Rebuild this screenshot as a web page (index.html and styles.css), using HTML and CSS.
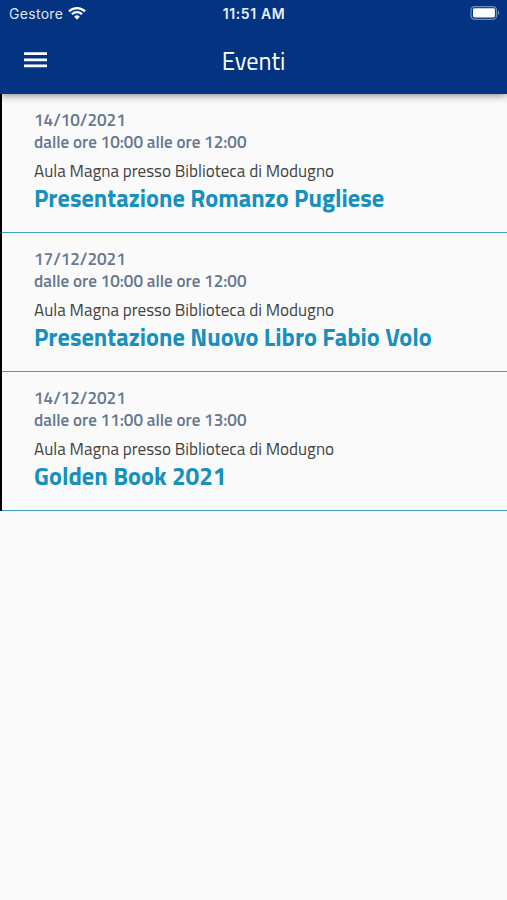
FILE: index.html
```html
<!DOCTYPE html>
<html lang="it">
  <head>
    <meta charset="utf-8">
    <meta name="viewport" content="width=device-width, initial-scale=1">
    <title>Eventi</title>
    <link rel="stylesheet" href="styles.css">
  </head>
  <body>
    <header class="header">
      <div class="status-bar">
        <div class="carrier">
          <span>Gestore</span>
          <svg class="wifi" viewBox="0 0 18 14" width="18" height="14">
            <path d="M1 5.3 A11.5 11.5 0 0 1 17 5.3" />
            <path d="M3.9 8.3 A7.3 7.3 0 0 1 14.1 8.3" />
            <path class="wifi-dot" d="M6.2 10.7 A4 4 0 0 1 11.8 10.7 L9 13.7 Z" />
          </svg>
        </div>
        <span class="clock">11:51 AM</span>
        <svg class="battery" viewBox="0 0 31 14" width="31" height="14">
          <rect class="battery-case" x="1" y=".7" width="25.5" height="12.6" rx="3.6" />
          <rect x="3" y="2.3" width="21.9" height="9.2" rx="1.4" />
          <path class="battery-cap" d="M28 4.6 Q30.6 7 28 9.4 Z" />
        </svg>
      </div>
      <div class="toolbar">
        <button class="menu" aria-label="Menu">
          <svg viewBox="0 0 23 16" width="23" height="16">
            <path d="M0 1.6 H23 M0 7.8 H23 M0 13.9 H23" />
          </svg>
        </button>
        <h1 class="title">Eventi</h1>
      </div>
    </header>
    <main class="events">
      <article class="event">
        <p class="date">14/10/2021</p>
        <p class="time">dalle ore 10:00 alle ore 12:00</p>
        <p class="place">Aula Magna presso Biblioteca di Modugno</p>
        <h2 class="name">Presentazione Romanzo Pugliese</h2>
      </article>
      <article class="event">
        <p class="date">17/12/2021</p>
        <p class="time">dalle ore 10:00 alle ore 12:00</p>
        <p class="place">Aula Magna presso Biblioteca di Modugno</p>
        <h2 class="name">Presentazione Nuovo Libro Fabio Volo</h2>
      </article>
      <article class="event">
        <p class="date">14/12/2021</p>
        <p class="time">dalle ore 11:00 alle ore 13:00</p>
        <p class="place">Aula Magna presso Biblioteca di Modugno</p>
        <h2 class="name">Golden Book 2021</h2>
      </article>
    </main>
  </body>
</html>
```

FILE: styles.css
```css
* {
  box-sizing: border-box;
}
body {
  --primary: #033381;
  --accent: #1790bd;
  --muted: #67788f;
  margin: 0;
  min-height: 100vh;
  background: #fafafa;
  color: #444;
  font-family: "Titillium Web", Roboto, sans-serif;
}

.header {
  position: relative;
  height: 94px;
  background: var(--primary);
  color: #fff;
  box-shadow: 0 1px 8px rgba(0, 0, 0, 0.5);
}
.status-bar {
  display: grid;
  grid-template-columns: 1fr auto 1fr;
  align-items: center;
  height: 27px;
  padding: 0 6px 0 9px;
  font-family: Inter, sans-serif;
  font-size: 14px;
}
.carrier {
  display: flex;
  align-items: center;
  gap: 5px;
  color: #dce6f8;
  letter-spacing: 0.3px;
}
.wifi {
  fill: none;
  stroke: #fff;
  stroke-width: 2.3;
  margin-top: -2px;
}
.wifi-dot {
  fill: #fff;
  stroke: none;
}
.clock {
  margin-right: 2px;
  color: #e8effc;
  font-weight: 600;
  letter-spacing: 0.6px;
}
.battery {
  justify-self: end;
  margin-top: -1px;
  fill: #fff;
}
.battery-case {
  fill: none;
  stroke: #6d8dbd;
  stroke-width: 1.3;
}
.battery-cap {
  fill: #6d8dbd;
}

.toolbar {
  display: grid;
  grid-template-columns: 1fr auto 1fr;
  align-items: center;
  height: 66px;
  padding: 0 24px;
}
.menu {
  display: flex;
  justify-self: start;
  margin-top: -1px;
  padding: 0;
  border: 0;
  background: none;
}
.menu svg {
  fill: none;
  stroke: #fff;
  stroke-width: 2.7;
}
.title {
  margin: 0;
  font-size: 24.3px;
  font-weight: 400;
}

.events {
  border-left: 2px solid #000;
}
.event {
  height: 139px;
  padding: 15px 32px 0;
  border-bottom: 1px solid #40a3bd;
}
.event p {
  margin: 0;
  line-height: 22px;
  white-space: nowrap;
}
.date,
.time {
  color: var(--muted);
  font-size: 17.1px;
  font-weight: 600;
}
.event .place {
  margin-top: 7px;
  font-size: 17.1px;
}
.name {
  margin: 1px 0 0;
  color: var(--accent);
  font-size: 24.4px;
  font-weight: 700;
  line-height: 30px;
  white-space: nowrap;
}
```
